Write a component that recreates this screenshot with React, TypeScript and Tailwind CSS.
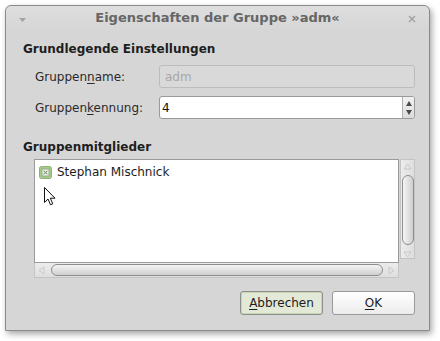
import React from "react";

const Mn = ({ children }: { children: React.ReactNode }) => (
  <span className="underline underline-offset-2 decoration-1">{children}</span>
);

function Checkbox() {
  return (
    <svg width="13" height="13" viewBox="0 0 13 13" className="shrink-0">
      <rect x="0.5" y="0.5" width="12" height="12" rx="2" fill="#a6cc88" stroke="#8fae78" />
      <rect x="3" y="3" width="7" height="7" fill="#f6f8f3" stroke="#93a987" />
      <path d="M4.6 4.6 L8.4 8.4 M8.4 4.6 L4.6 8.4" stroke="#8b9c80" strokeWidth="1.1" />
    </svg>
  );
}

function Cursor() {
  return (
    <svg width="12" height="19" viewBox="0 0 12 19" className="absolute left-[44px] top-[187px]">
      <path d="M0.5 0.5 L0.5 15.5 L4 12 L6.5 17.8 L8.8 16.8 L6.3 11.2 L11 11.2 Z" fill="#ffffff" stroke="#111111" strokeWidth="1" strokeLinejoin="round" />
    </svg>
  );
}

function VScroll() {
  return (
    <div className="w-[15px] border border-[#c4c4c4] bg-gradient-to-r from-[#ececec] to-[#dedede] flex flex-col items-center">
      <svg width="9" height="7" viewBox="0 0 9 7" className="mt-[3px]">
        <path d="M4.5 1 L8 6 L1 6 Z" fill="none" stroke="#c9c9c9" />
      </svg>
      <div className="mt-[5px] w-[12px] h-[70px] rounded-full border border-[#8e8e8e] bg-gradient-to-r from-[#f4f4f4] via-[#e2e2e2] to-[#cfcfcf]" />
      <svg width="9" height="7" viewBox="0 0 9 7" className="mt-[6px]">
        <path d="M1 1 L8 1 L4.5 6 Z" fill="none" stroke="#c9c9c9" />
      </svg>
    </div>
  );
}

function HScroll() {
  return (
    <div className="flex-1 h-[15px] border border-t-0 border-[#c4c4c4] bg-gradient-to-b from-[#ececec] to-[#dedede] flex items-center">
      <svg width="7" height="9" viewBox="0 0 7 9" className="ml-[3px]">
        <path d="M1 4.5 L6 1 L6 8 Z" fill="none" stroke="#c9c9c9" />
      </svg>
      <div className="ml-[6px] flex-1 h-[12px] rounded-full border border-[#8e8e8e] bg-gradient-to-b from-[#f4f4f4] via-[#e2e2e2] to-[#cfcfcf]" />
      <svg width="7" height="9" viewBox="0 0 7 9" className="ml-[5px] mr-[3px]">
        <path d="M1 1 L6 4.5 L1 8 Z" fill="none" stroke="#c9c9c9" />
      </svg>
    </div>
  );
}

export default function App() {
  return (
    <div className="relative w-[440px] h-[341px] bg-white overflow-hidden font-['DejaVu_Sans',sans-serif] text-[12px] leading-[16px] text-[#2a2a2a]">
      <div className="ml-[5px] mt-[5px] w-[425px] h-[326px] rounded-t-[6px] border border-[#8a8a8a] bg-[#d6d6d6] shadow-[2px_3px_6px_rgba(0,0,0,0.35)] flex flex-col">
        {/* title bar */}
        <div className="relative h-[24px] flex items-center justify-center rounded-t-[6px] bg-gradient-to-b from-[#dedede] to-[#d6d6d6]">
          <svg width="7" height="4" viewBox="0 0 7 4" className="absolute left-[13px] top-[12px]">
            <path d="M0 0 L7 0 L3.5 4 Z" fill="#a3a3a3" />
          </svg>
          <span className="text-[13px] font-bold text-[#666666] leading-[24px]">
            Eigenschaften der Gruppe »adm«
          </span>
          <svg width="8" height="8" viewBox="0 0 8 8" className="absolute right-[13px] top-[9px]">
            <path d="M1 1 L7 7 M7 1 L1 7" stroke="#a5a5a5" strokeWidth="1.6" />
          </svg>
        </div>

        {/* content */}
        <div className="flex flex-col pl-[17px] pr-[14px]">
          <div className="mt-[11px] font-bold text-[#1e1e1e]">Grundlegende Einstellungen</div>
          <div className="pl-[11px] flex flex-col">
            <div className="mt-[8px] flex items-center h-[23px]">
              <div className="w-[125px] pl-[1px]">
                Gruppen<Mn>n</Mn>ame:
              </div>
              <div className="flex-1 h-[23px] rounded-[3px] border border-[#bcbcbc] bg-[#d9d9d9] px-[5px] flex items-center text-[#a8a8a8]">
                adm
              </div>
            </div>
            <div className="mt-[8px] flex items-center h-[23px]">
              <div className="w-[125px] pl-[1px]">
                Gruppen<Mn>k</Mn>ennung:
              </div>
              <div className="flex-1 h-[23px] rounded-[3px] border border-[#9a9a9a] bg-white flex">
                <div className="flex-1 px-[2px] flex items-center text-[#111]">4</div>
                <div className="w-[12px] border-l border-[#b0b0b0] rounded-r-[2px] bg-gradient-to-b from-[#f2f2f2] to-[#dcdcdc] flex flex-col items-center justify-center gap-[4px]">
                  <svg width="6" height="5" viewBox="0 0 6 5"><path d="M3 0 L6 5 L0 5 Z" fill="#4a4a4a" /></svg>
                  <svg width="6" height="5" viewBox="0 0 6 5"><path d="M0 0 L6 0 L3 5 Z" fill="#4a4a4a" /></svg>
                </div>
              </div>
            </div>
          </div>

          <div className="mt-[20px] font-bold text-[#1e1e1e]">Gruppenmitglieder</div>
          <div className="pl-[11px] mt-[4px] flex flex-col">
            <div className="flex h-[104px]">
              <div className="flex-1 border border-[#9b9b9b] bg-white pt-[4px] pl-[4px]">
                <div className="flex items-center gap-[5px] h-[16px]">
                  <Checkbox />
                  <span className="text-[#1c1c1c]">Stephan Mischnick</span>
                </div>
              </div>
              <div className="ml-[1px]">
                <VScroll />
              </div>
            </div>
            <div className="flex">
              <HScroll />
              <div className="w-[16px]" />
            </div>
          </div>

          <div className="mt-[13px] flex justify-end gap-[9px]">
            <button className="w-[83px] h-[24px] rounded-[3px] border border-[#8f8f8f] bg-[#e2e9d6] shadow-[inset_0_0_0_1px_#c6d6b0] text-[#1c1c1c] flex items-center justify-center">
              <Mn>A</Mn>bbrechen
            </button>
            <button className="w-[83px] h-[24px] rounded-[3px] border border-[#9a9a9a] bg-gradient-to-b from-white to-[#ececec] text-[#1c1c1c] flex items-center justify-center">
              <Mn>O</Mn>K
            </button>
          </div>
        </div>
      </div>
      <Cursor />
    </div>
  );
}
